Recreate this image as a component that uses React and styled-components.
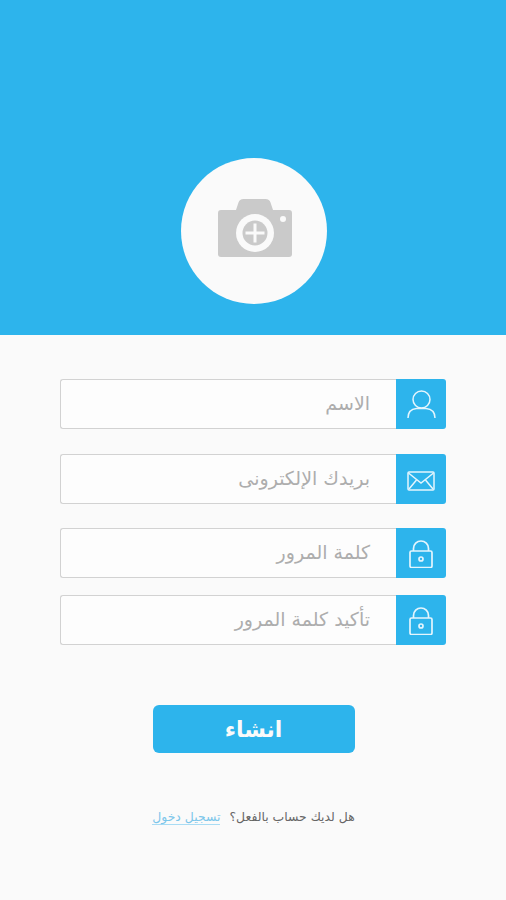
import React from 'react';
import styled, { createGlobalStyle } from 'styled-components';

const GlobalStyle = createGlobalStyle`
    html, body {
        margin: 0;
        padding: 0;
        background: #fafafa;
        font-family: "DejaVu Sans", "Noto Sans", sans-serif;
    }
`;

const CameraIcon = () => (
    <svg width="74" height="58" viewBox="0 0 74 58">
        <path fill="#cacaca" d="M3 11h15l2.500-7.500q1-3.500 5-3.500h22q4 0 5 3.500L55 11h16q3 0 3 3v41q0 3-3 3H3q-3 0-3-3V14q0-3 3-3z" />
        <circle cx="37" cy="34" r="19" fill="#fafafa" />
        <circle cx="37" cy="34" r="12.500" fill="#cacaca" />
        <rect x="35.500" y="24.500" width="3" height="19" fill="#fafafa" />
        <rect x="27.500" y="32.500" width="19" height="3" fill="#fafafa" />
        <circle cx="65" cy="20" r="3" fill="#fafafa" />
    </svg>
);

const UserIcon = () => (
    <svg width="30" height="30" viewBox="0 0 30 30" fill="none" stroke="#e4f5fd" strokeWidth="1.500">
        <circle cx="15.500" cy="10.500" r="8.500" />
        <path d="M2 29c0-6 3-9 8.500-9.500h9.500c5.500 .5 9 3.500 9 9.500" />
    </svg>
);

const MailIcon = () => (
    <svg width="30" height="30" viewBox="0 0 30 30" fill="none" stroke="#e4f5fd" strokeWidth="1.500">
        <rect x="2" y="8" width="26" height="18" rx="1" />
        <path d="M2.500 9 15 19 27.500 9" />
        <path d="M3 25 10.500 16M27 25 19.500 16" />
    </svg>
);

const LockIcon = () => (
    <svg width="26" height="30" viewBox="0 0 26 30" fill="none" stroke="#e4f5fd" strokeWidth="1.700">
        <rect x="2" y="13" width="22" height="16.500" rx="1.500" />
        <path d="M5.500 13V10.500a7.500 7.500 0 0 1 15 0V13" />
        <circle cx="13" cy="21" r="2" />
    </svg>
);

const fields = [
    { label: 'الاسم', icon: <UserIcon />, gap: 0 },
    { label: 'بريدك الإلكترونى', icon: <MailIcon />, gap: 25 },
    { label: 'كلمة المرور', icon: <LockIcon />, gap: 24 },
    { label: 'تأكيد كلمة المرور', icon: <LockIcon />, gap: 17 },
];

const App = () => {
    return (
        <Page>
            <GlobalStyle />
            <Header>
                <AvatarButton>
                    <CameraIcon />
                </AvatarButton>
            </Header>
            <Form>
                {fields.map((field) => (
                    <Field key={field.label} $gap={field.gap}>
                        <Label>{field.label}</Label>
                        <IconBox>{field.icon}</IconBox>
                    </Field>
                ))}
                <Submit>انشاء</Submit>
                <Footer>
                    <span>هل لديك حساب بالفعل؟</span>
                    <LoginLink>تسجيل دخول</LoginLink>
                </Footer>
            </Form>
        </Page>
    );
};

const Page = styled.div`
    width: 506px;
    height: 900px;
    background: #fafafa;
    overflow: hidden;
`;

const Header = styled.div`
    height: 335px;
    padding: 158px 179px 0 181px;
    box-sizing: border-box;
    background: #2db4ec;
`;

const AvatarButton = styled.div`
    width: 146px;
    height: 146px;
    box-sizing: border-box;
    padding: 0 0 6px 2px;
    border-radius: 50%;
    background: #fafafa;
    display: flex;
    align-items: center;
    justify-content: center;
`;

const Form = styled.div`
    padding: 44px 60px 0;
    display: flex;
    flex-direction: column;
    align-items: flex-start;
`;

const Field = styled.div`
    width: 386px;
    height: 50px;
    margin-top: ${(props) => props.$gap}px;
    display: flex;
    box-sizing: border-box;
    border-radius: 3px;
`;

const Label = styled.div`
    flex: 1;
    box-sizing: border-box;
    padding: 0 26px 2px 0;
    display: flex;
    align-items: center;
    direction: rtl;
    font-size: 19px;
    color: #adadad;
    background: #fdfdfd;
    border: 1.5px solid #d2d2d2;
    border-right: none;
    border-radius: 3px 0 0 3px;
`;

const IconBox = styled.div`
    width: 50px;
    display: flex;
    align-items: center;
    justify-content: center;
    background: #2db4ec;
    border-radius: 0 3px 3px 0;
`;

const Submit = styled.button`
    align-self: center;
    width: 202px;
    height: 48px;
    margin: 60px 0 0 1px;
    border: none;
    border-radius: 6px;
    background: #2db4ec;
    color: #fafafa;
    font-family: inherit;
    font-size: 22px;
    font-weight: bold;
    padding: 0;
`;

const Footer = styled.div`
    align-self: center;
    margin: 56px 0 0 1px;
    display: flex;
    direction: rtl;
    gap: 9px;
    font-size: 12.4px;
    color: #666;
`;

const LoginLink = styled.span`
    color: #7cc6ea;
    border-bottom: 1px solid #a9dcf4;
`;

export default App;
